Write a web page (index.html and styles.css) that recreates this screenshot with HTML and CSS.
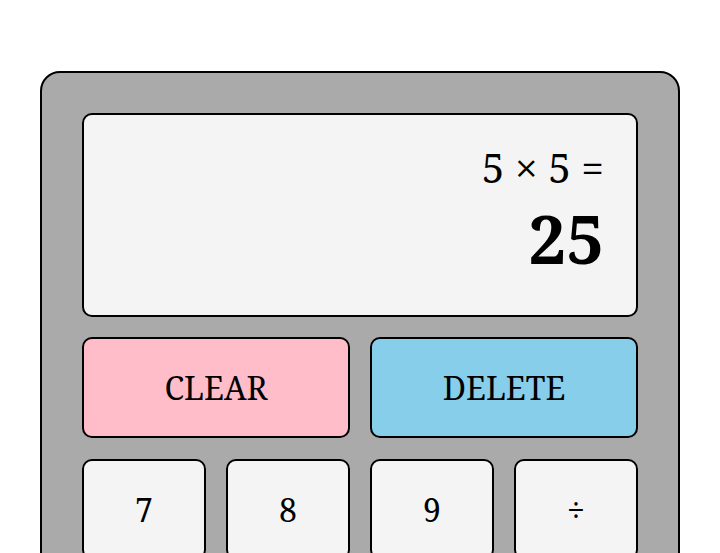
FILE: index.html
```html
<!DOCTYPE html>
<html>
<head>
<meta charset="utf-8">
<link rel="stylesheet" href="styles.css">
</head>
<body>
<div class="calc">
  <div class="display">
    <div class="expr">5 × 5 =</div>
    <div class="result">25</div>
  </div>
  <div class="row2">
    <button class="btn clear">CLEAR</button>
    <button class="btn delete">DELETE</button>
  </div>
  <div class="keys">
    <button class="btn">7</button>
    <button class="btn">8</button>
    <button class="btn">9</button>
    <button class="btn">÷</button>
  </div>
</div>
</body>
</html>
```
FILE: styles.css
```css
html, body {
  margin: 0;
  padding: 0;
  background: #fff;
  font-family: "Noto Serif", serif;
}
body {
  padding: 71px 40px 0 40px;
}
.calc {
  background: #aaaaaa;
  border: 2px solid #000;
  border-radius: 20px;
  padding: 40px 40px 40px 40px;
  height: 600px;
  box-sizing: border-box;
}
.display {
  background: #f4f4f4;
  border: 2px solid #000;
  border-radius: 10px;
  height: 204px;
  box-sizing: border-box;
  padding: 26px 32px 0 0;
  text-align: right;
}
.expr {
  font-size: 40.5px;
  line-height: 54.5px;
}
.result {
  font-size: 67px;
  font-weight: bold;
  line-height: 85px;
}
.row2 {
  display: grid;
  grid-template-columns: 1fr 1fr;
  gap: 20px;
  margin-top: 20px;
}
.keys {
  display: grid;
  grid-template-columns: repeat(4, 1fr);
  gap: 20px;
  margin-top: 21px;
}
.btn {
  font-family: "Noto Serif", serif;
  font-size: 32px;
  color: #000;
  background: #f4f4f4;
  border: 2px solid #000;
  border-radius: 10px;
  height: 101px;
  padding: 0;
}
.clear { background: #ffbcc9; }
.delete { background: #87ceeb; }
```
